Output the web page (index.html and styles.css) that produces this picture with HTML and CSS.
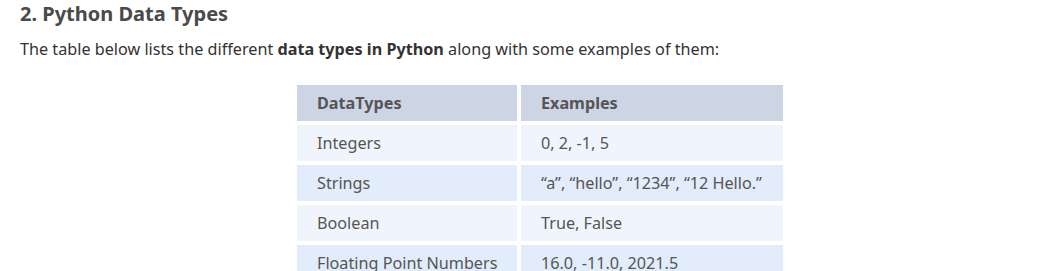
FILE: index.html
```html
<!DOCTYPE html>
<html>
<head>
<meta charset="utf-8">
<link rel="stylesheet" href="styles.css">
</head>
<body>
<div class="content">
  <h2 class="title">2. Python Data Types</h2>
  <p class="intro">The table below lists the different <strong>data types in Python</strong> along with some examples of them:</p>
  <div class="table-wrap">
    <table class="types">
      <thead>
        <tr><th class="c1">DataTypes</th><th class="c2">Examples</th></tr>
      </thead>
      <tbody>
        <tr class="odd"><td>Integers</td><td>0, 2, -1, 5</td></tr>
        <tr class="even"><td>Strings</td><td>“a”, “hello”, “1234”, “12 Hello.”</td></tr>
        <tr class="odd"><td>Boolean</td><td>True, False</td></tr>
        <tr class="even"><td>Floating Point Numbers</td><td>16.0, -11.0, 2021.5</td></tr>
      </tbody>
    </table>
  </div>
</div>
</body>
</html>
```
FILE: styles.css
```css
html, body {
  margin: 0;
  padding: 0;
  background: #ffffff;
}
body {
  font-family: "Noto Sans", "Open Sans", sans-serif;
  color: #333333;
}
.content {
  padding: 0 20px;
}
.title {
  margin: 0;
  font-size: 20px;
  line-height: 28px;
  font-weight: 700;
  color: #4a4a4a;
}
.intro {
  margin: 8px 0 0 0;
  font-size: 16.2px;
  line-height: 26px;
  color: #333333;
}
.intro strong {
  font-weight: 700;
}
.table-wrap {
  display: flex;
  margin-top: 19px;
  padding-left: 273px;
}
.types {
  border-collapse: separate;
  border-spacing: 4px;
  table-layout: fixed;
  width: 494px;
  font-size: 16.2px;
  color: #555555;
}
.types th, .types td {
  height: 36px;
  padding: 0 20px;
  text-align: left;
  vertical-align: middle;
  white-space: nowrap;
  box-sizing: border-box;
}
.types th {
  background: #cdd4e3;
  font-weight: 700;
}
.types .c1 { width: 220px; }
.types .c2 { width: 262px; }
.types tr.odd td { background: #f0f5fd; }
.types tr.even td { background: #e2ecfb; }
```
